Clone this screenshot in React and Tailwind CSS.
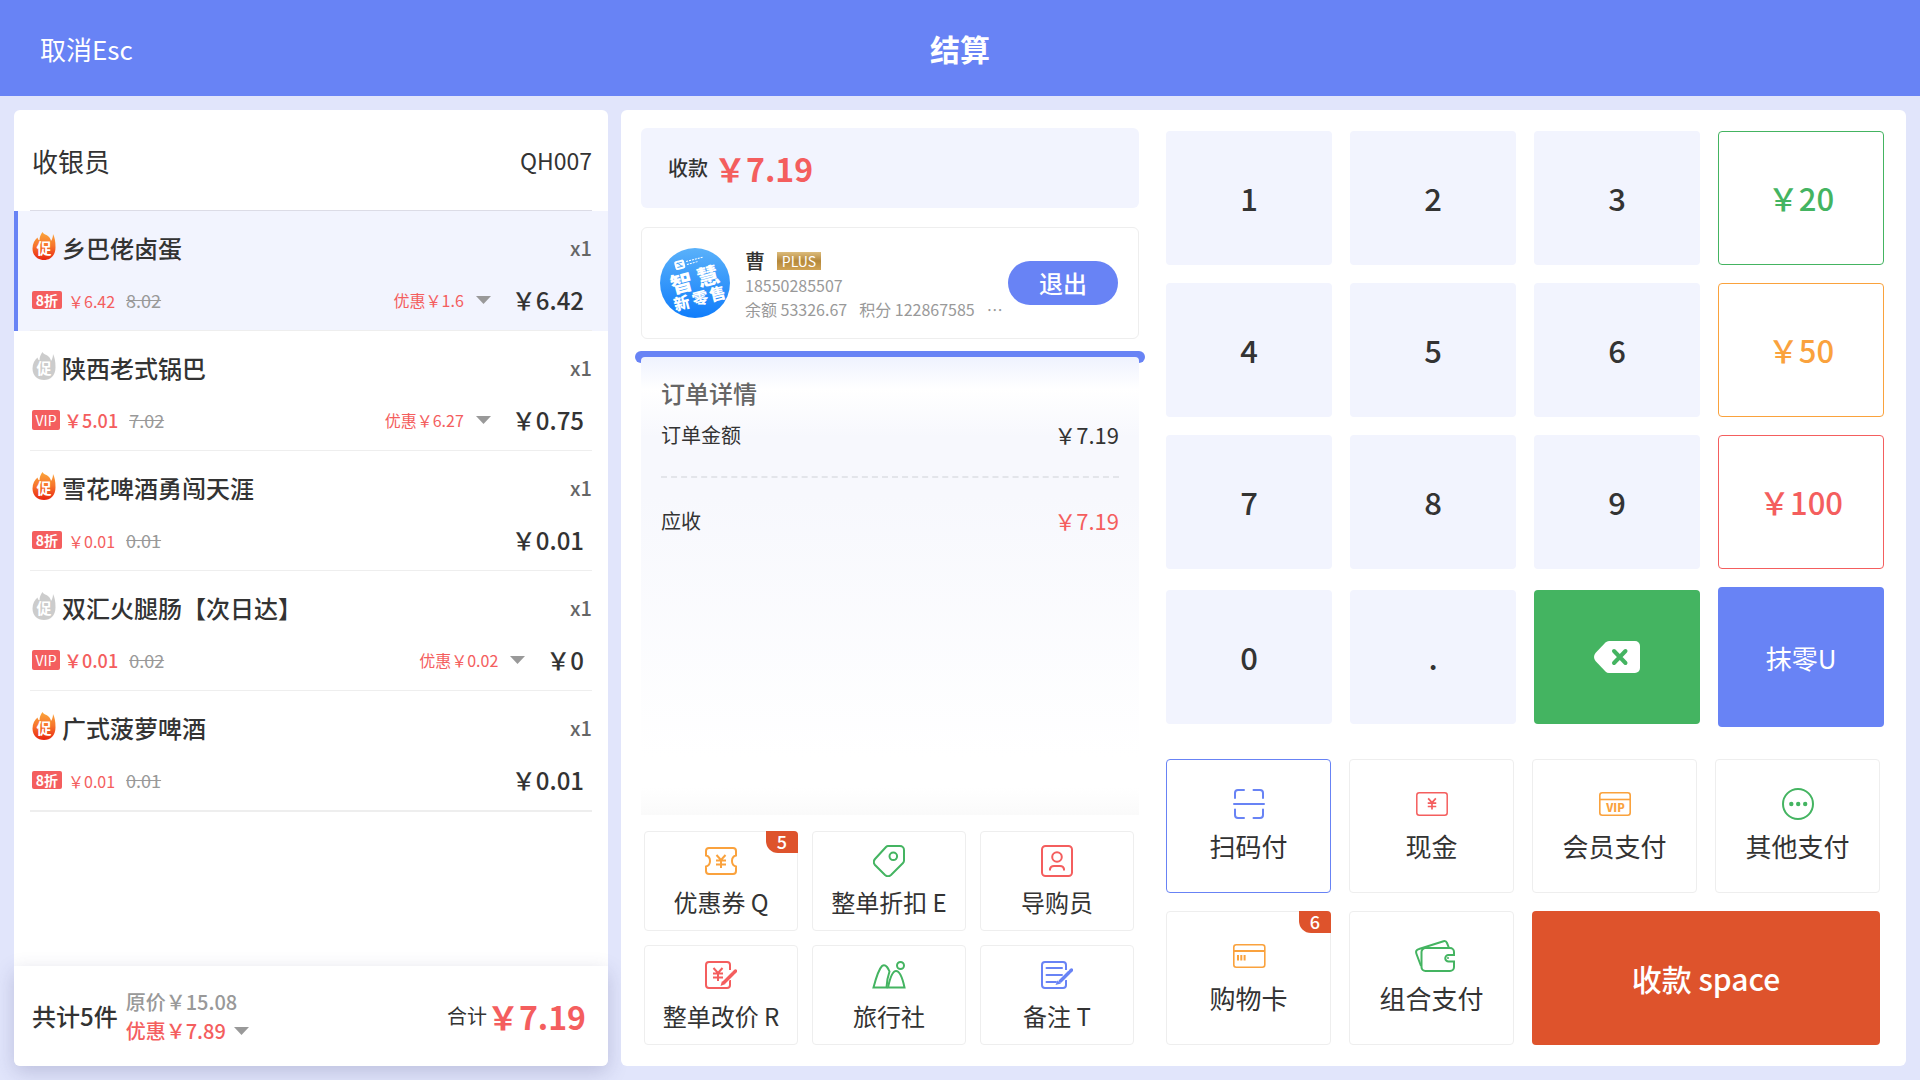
import { useState } from 'react';

const ITEMS = [
  { id: 1, name: '乡巴佬卤蛋', hot: true, tag: '8折', price: '￥6.42', origin: '8.02', discount: '优惠￥1.6', total: '￥6.42' },
  { id: 2, name: '陕西老式锅巴', hot: false, tag: 'VIP', price: '￥5.01', origin: '7.02', discount: '优惠￥6.27', total: '￥0.75' },
  { id: 3, name: '雪花啤酒勇闯天涯', hot: true, tag: '8折', price: '￥0.01', origin: '0.01', total: '￥0.01' },
  { id: 4, name: '双汇火腿肠【次日达】', hot: false, tag: 'VIP', price: '￥0.01', origin: '0.02', discount: '优惠￥0.02', total: '￥0' },
  { id: 5, name: '广式菠萝啤酒', hot: true, tag: '8折', price: '￥0.01', origin: '0.01', total: '￥0.01' },
];

const NUMBER_KEY = 'h-[134px] rounded bg-[#f2f4fe] text-[#333]';

const KEYS = [
  { label: '1', style: NUMBER_KEY },
  { label: '2', style: NUMBER_KEY },
  { label: '3', style: NUMBER_KEY },
  { label: '￥20', style: 'h-[134px] rounded border border-[#44b461] text-[#44b461]' },
  { label: '4', style: NUMBER_KEY },
  { label: '5', style: NUMBER_KEY },
  { label: '6', style: NUMBER_KEY },
  { label: '￥50', style: 'h-[134px] rounded border border-[#faa23d] text-[#faa23d]' },
  { label: '7', style: NUMBER_KEY },
  { label: '8', style: NUMBER_KEY },
  { label: '9', style: NUMBER_KEY },
  { label: '￥100', style: 'h-[134px] rounded border border-[#f45e5e] text-[#f45e5e]' },
  { label: '0', style: NUMBER_KEY },
  { label: '.', style: NUMBER_KEY },
];

function FlameIcon({ hot, id }) {
  return (
    <svg width="24" height="30" viewBox="0 0 24 30" className="mb-1 shrink-0">
      <defs>
        <linearGradient id={id} x1="0" y1="0" x2="0" y2="1">
          <stop offset="0" stopColor={hot ? '#fba73c' : '#cccccc'} />
          <stop offset="0.5" stopColor={hot ? '#f7742c' : '#cccccc'} />
          <stop offset="1" stopColor={hot ? '#e8230f' : '#cccccc'} />
        </linearGradient>
      </defs>
      <path
        d="M10.5 1c1 2.500 4 2.500 6 4.500 1.500 1.500 2.300 2.800 2.500 4.500 1.200-1.600 2-3.800 2-7 1.600 3 2.500 7 2.500 13.500 0 8-5 12.500-11.500 12.500S.5 24.500.5 17.500c0-5 2.300-8.500 5-11 .3 1.600 1 2.500 2 3 0-3.500 1-6 3-8.500z"
        fill={`url(#${id})`}
      />
      <text x="12" y="23" textAnchor="middle" fontSize="15" fontWeight="700" fill="#fff">促</text>
    </svg>
  );
}

function Yen({ x, y, s = 1 }) {
  return (
    <path
      d="M-4.500-6 0-1 4.500-6M0-1V7M-5-.5H5M-5 3.500H5"
      transform={`translate(${x} ${y}) scale(${s})`}
      fill="none"
      stroke="currentColor"
      strokeWidth="2"
    />
  );
}

function CouponIcon() {
  return (
    <svg width="32" height="28" viewBox="0 0 32 28" fill="none" stroke="currentColor" strokeWidth="2">
      <path d="M4 1h24a3 3 0 0 1 3 3v4.500c-2 .5-4 2.500-4 5.500s2 5 4 5.500V24a3 3 0 0 1-3 3H4a3 3 0 0 1-3-3v-4.500c2-.5 4-2.500 4-5.500S3 9 1 8.500V4a3 3 0 0 1 3-3z" />
      <Yen x={16} y={14} />
    </svg>
  );
}

function TagIcon() {
  return (
    <svg width="32" height="32" viewBox="0 0 32 32" fill="none" stroke="currentColor" strokeWidth="2">
      <path d="M15 1h12a4 4 0 0 1 4 4v10.500q0 1.500-1 2.500L18 30q-3 2.500-6 0L2 20q-2.500-3 0-6L13 2q1-1 2-1z" />
      <circle cx="20.300" cy="11.300" r="3.800" />
    </svg>
  );
}

function GuideIcon() {
  return (
    <svg width="32" height="32" viewBox="0 0 32 32" fill="none" stroke="currentColor" strokeWidth="2">
      <rect x="1" y="1" width="30" height="30" rx="3.500" />
      <circle cx="16" cy="12" r="4.800" />
      <path d="M9 25.500V24q.5-3 4-3h6q3.500 0 4 3v1.500" />
    </svg>
  );
}

function EditPriceIcon() {
  return (
    <svg width="32" height="28" viewBox="0 0 32 28" fill="none" stroke="currentColor" strokeWidth="2">
      <path d="M25 9V4a3 3 0 0 0-3-3H4a3 3 0 0 0-3 3v20a3 3 0 0 0 3 3h18a3 3 0 0 0 3-3v-5" />
      <Yen x={13} y={13} />
      <path d="M19 21.500 29.500 10.500" stroke="#fff" strokeWidth="5" />
      <path d="M19.500 21 28 12.500M29 11.500 30.500 10" strokeWidth="3.500" strokeLinecap="round" />
      <path d="m15.500 25 1.500-5 3.500 3z" fill="currentColor" stroke="none" />
    </svg>
  );
}

function MountainIcon() {
  return (
    <svg width="34" height="28" viewBox="0 0 34 28" fill="none" stroke="currentColor" strokeWidth="2">
      <path d="M14.500 26.500H1.500C4 17 7 8 10 5q2.500-2 5 1 1.500 1.800 2.500 4.500-2.500 7-3 16z" />
      <path d="M16 26.500C18 17 20.500 10 24 10s6.500 7 8.500 16.500z" />
      <circle cx="28.500" cy="4.500" r="3.500" />
    </svg>
  );
}

function NoteIcon() {
  return (
    <svg width="32" height="28" viewBox="0 0 32 28" fill="none" stroke="currentColor" strokeWidth="2">
      <path d="M25 9V4a3 3 0 0 0-3-3H4a3 3 0 0 0-3 3v20a3 3 0 0 0 3 3h18a3 3 0 0 0 3-3v-5" />
      <path d="M5.500 7H21M5.500 14H21M5.500 21H15" strokeLinecap="round" />
      <path d="M19.500 20.500 28 12" stroke="#fff" strokeWidth="5" />
      <path d="M19.500 20 28 11.500M29.500 10 30.500 9" strokeWidth="3.500" strokeLinecap="round" />
      <path d="m14.500 24 2-4.500 3.500 3z" fill="currentColor" stroke="none" />
    </svg>
  );
}

function ScanIcon() {
  return (
    <svg width="32" height="32" viewBox="0 0 32 32" fill="none" stroke="currentColor" strokeWidth="2" strokeLinecap="round">
      <path d="M2 10V5a3 3 0 0 1 3-3h6M20.500 2H27a3 3 0 0 1 3 3v5M2 21.500V27a3 3 0 0 0 3 3h6M20.500 30H27a3 3 0 0 0 3-3v-5.500M1 16H31" />
    </svg>
  );
}

function CashIcon() {
  return (
    <svg width="32" height="24" viewBox="0 0 32 24" fill="none" stroke="currentColor" strokeWidth="1.500">
      <rect x=".8" y=".8" width="30.400" height="22.400" rx="2.500" />
      <Yen x={16} y={11.500} s={0.85} />
    </svg>
  );
}

function VipIcon() {
  return (
    <svg width="32" height="24" viewBox="0 0 32 24" fill="none" stroke="currentColor" strokeWidth="1.600">
      <rect x=".8" y=".8" width="30.400" height="22.400" rx="2.500" />
      <path d="M1 7.500H31" />
      <text x="16.500" y="19.500" textAnchor="middle" fontSize="11" fontWeight="900" fill="currentColor" stroke="none">VIP</text>
    </svg>
  );
}

function MoreIcon() {
  return (
    <svg width="32" height="32" viewBox="0 0 32 32" fill="currentColor">
      <circle cx="16" cy="16" r="15" fill="none" stroke="currentColor" strokeWidth="2" />
      <circle cx="9.300" cy="16" r="2.200" />
      <circle cx="16.200" cy="16" r="2.200" />
      <circle cx="23.200" cy="16" r="2.200" />
    </svg>
  );
}

function CardIcon() {
  return (
    <svg width="34" height="24" viewBox="-1 0 34 24" fill="none" stroke="currentColor" strokeWidth="1.600">
      <rect x=".8" y=".8" width="31" height="22.400" rx="2.500" />
      <path d="M1 7H31.500" strokeWidth="2" />
      <path d="M5 11v5.500M8.300 11v5.500M11.600 11v5.500" strokeWidth="2" />
    </svg>
  );
}

function WalletIcon() {
  return (
    <svg width="47" height="32" viewBox="-7 0 47 32" fill="none" stroke="currentColor" strokeWidth="2">
      <path d="M10.500 8H35a4 4 0 0 1 4 4v3h-5.500a3.200 3.200 0 0 0 0 6.500H39V27a4 4 0 0 1-4 4H10.500A4 4 0 0 1 6.500 27V12a4 4 0 0 1 4-4z" />
      <path d="M6 26 1.500 14Q0 10 4 9L28.500 1.200Q31 .6 32 3l2 5" />
      <circle cx="33" cy="18" r="1" fill="currentColor" stroke="none" />
    </svg>
  );
}

function BackspaceIcon() {
  return (
    <svg width="46" height="32" viewBox="0 0 46 32">
      <path d="M15 0H41a5 5 0 0 1 5 5V27a5 5 0 0 1-5 5H15q-2 0-3.500-1.500L1.500 20q-3-4 0-8L11.500 1.500Q13 0 15 0z" fill="#fff" />
      <path d="M20 10 31.500 22M31.500 10 20 22" stroke="#44b461" strokeWidth="4" strokeLinecap="round" />
    </svg>
  );
}

function Avatar() {
  return (
    <svg width="70" height="70" viewBox="0 0 70 70" className="shrink-0">
      <defs>
        <linearGradient id="avatarBg" x1="0" y1="0" x2="0" y2="1">
          <stop offset="0" stopColor="#5ab1fa" />
          <stop offset="1" stopColor="#107dfb" />
        </linearGradient>
      </defs>
      <circle cx="35" cy="35" r="35" fill="url(#avatarBg)" />
      <g transform="rotate(-15 35 35)" fill="#fff" fontWeight="900">
        <rect x="20" y="9" width="10" height="9" rx="2" />
        <path d="M22 11.500h6M22 15.500h6M23 11l4 5" stroke="#4ba6fa" strokeWidth="1" />
        <path d="M32 12h17M32 15h12" stroke="#fff" strokeWidth="1" strokeDasharray="2 1" />
        <text x="11" y="40" fontSize="22">智</text>
        <text x="38" y="40" fontSize="22">慧</text>
        <text x="9" y="57" fontSize="16">新</text>
        <text x="28" y="57" fontSize="16">零</text>
        <text x="46" y="57" fontSize="16">售</text>
      </g>
    </svg>
  );
}

function Caret() {
  return (
    <svg width="15" height="8" viewBox="0 0 15 8" fill="#999">
      <path d="M0 0H15L7.500 8z" />
    </svg>
  );
}

const ACTIONS = [
  { label: '优惠券 Q', Icon: CouponIcon, color: 'text-[#faa23d]', badge: 5 },
  { label: '整单折扣 E', Icon: TagIcon, color: 'text-[#44b461]' },
  { label: '导购员', Icon: GuideIcon, color: 'text-[#f45e5e]' },
  { label: '整单改价 R', Icon: EditPriceIcon, color: 'text-[#f45e5e]' },
  { label: '旅行社', Icon: MountainIcon, color: 'text-[#44b461]' },
  { label: '备注 T', Icon: NoteIcon, color: 'text-[#6883f5]' },
];

const PAYMENTS = [
  { label: '扫码付', Icon: ScanIcon, color: 'text-[#6883f5]' },
  { label: '现金', Icon: CashIcon, color: 'text-[#f45e5e]' },
  { label: '会员支付', Icon: VipIcon, color: 'text-[#faa23d]' },
  { label: '其他支付', Icon: MoreIcon, color: 'text-[#44b461]' },
  { label: '购物卡', Icon: CardIcon, color: 'text-[#faa23d]', badge: 6 },
  { label: '组合支付', Icon: WalletIcon, color: 'text-[#44b461]' },
];

function Badge({ children }) {
  return (
    <span className="absolute -top-px -right-px w-8 h-[22px] rounded-tr rounded-bl-xl bg-[#de532c] text-white text-lg leading-5 font-medium text-center">
      {children}
    </span>
  );
}

function CartItem({ item, selected, onSelect }) {
  return (
    <li
      onClick={onSelect}
      className={selected ? 'border-l-4 border-[#6883f5] bg-[#f2f4fe] pl-3 pr-4' : 'border-l-4 border-transparent pl-3 pr-4'}
    >
      <div className="h-[120px] border-b border-[#eee] pt-[17px] pl-0.5">
        <div className="flex items-center">
          <FlameIcon hot={item.hot} id={`flame${item.id}`} />
          <span className="ml-1.5 text-2xl leading-10 font-medium text-[#333]">{item.name}</span>
          <span className="ml-auto text-xl leading-10 font-medium text-[#666]">x1</span>
        </div>
        <div className="mt-3 flex h-10 items-center">
          {item.tag === 'VIP' ? (
            <>
              <span className="h-5 w-7 rounded-xs bg-[#f45e5e] text-sm leading-5 text-center text-white">VIP</span>
              <span className="ml-1 text-lg font-medium text-[#f45e5e]">{item.price}</span>
            </>
          ) : (
            <>
              <span className="h-[18px] w-[30px] rounded-xs bg-[#f45e5e] text-sm leading-[18px] font-bold text-center text-white">8折</span>
              <span className="ml-1.5 pt-0.5 text-base text-[#f45e5e]">{item.price}</span>
            </>
          )}
          <s className="ml-[11px] text-lg text-[#999]">{item.origin}</s>
          {item.discount && (
            <button className="ml-auto flex items-center gap-3 text-base text-[#f45e5e]">
              {item.discount}
              <Caret />
            </button>
          )}
          <span className={item.discount ? 'ml-[21px] mr-2 text-2xl font-medium text-[#333]' : 'ml-auto mr-2 text-2xl font-medium text-[#333]'}>
            {item.total}
          </span>
        </div>
      </div>
    </li>
  );
}

export default function App() {
  const [selected, setSelected] = useState(1);
  const [payment, setPayment] = useState('扫码付');

  return (
    <div className="flex min-h-screen flex-col bg-[#e1e5fb] font-['Noto_Sans_CJK_SC',sans-serif] text-[#333]">
      <header className="grid h-24 grid-cols-3 items-center bg-[#6883f5] px-10 text-white">
        <button className="justify-self-start text-[26px]">取消Esc</button>
        <h1 className="text-center text-3xl font-bold">结算</h1>
      </header>

      <main className="grid flex-1 grid-cols-[594fr_1285fr] gap-[13px] p-[14px]">
        <section className="flex flex-col rounded-md bg-white">
          <div className="mx-4 flex h-[101px] items-center justify-between border-b border-[#dcdce6] pl-0.5">
            <span className="text-[26px]">收银员</span>
            <span className="text-[23px]">QH007</span>
          </div>
          <ul>
            {ITEMS.map((item) => (
              <CartItem key={item.id} item={item} selected={selected === item.id} onSelect={() => setSelected(item.id)} />
            ))}
          </ul>
          <div className="mx-4 h-px bg-[#eee]" />

          <div className="mt-auto flex h-[100px] items-center rounded-b-md bg-white px-[18px] shadow-[0_6px_20px_rgba(60,60,120,0.22)]">
            <span className="text-2xl font-medium">共计5件</span>
            <div className="ml-2 text-xl leading-[29px] font-medium">
              <div className="text-[#999]">原价￥15.08</div>
              <button className="flex items-center gap-2 text-[#f45e5e]">
                优惠￥7.89
                <Caret />
              </button>
            </div>
            <span className="ml-auto text-xl">合计</span>
            <span className="mr-1 text-[32px] font-bold text-[#f45e5e]">￥7.19</span>
          </div>
        </section>

        <section className="grid grid-cols-[498fr_718fr] gap-[27px] rounded-md bg-white pl-5 pr-[22px]">
          <div className="flex min-w-0 flex-col pt-[18px] pb-[21px]">
            <div className="flex h-20 items-center rounded-md bg-[#f2f4fe] px-[27px]">
              <span className="text-xl font-medium">收款</span>
              <span className="ml-1.5 text-[32px] font-bold text-[#f45e5e]">￥7.19</span>
            </div>

            <div className="mt-[19px] flex h-28 items-center rounded-md border border-[#eee] pl-[18px] pr-5">
              <Avatar />
              <div className="ml-[15px] min-w-0 flex-1 pt-1 text-base leading-6 text-[#999]">
                <div className="flex items-center">
                  <span className="text-xl font-medium leading-6 text-[#333]">曹</span>
                  <span className="ml-3 h-[18px] w-11 bg-linear-to-b from-[#dcbc7c] via-[#b5883a] to-[#d0a354] text-center text-sm leading-[18px] text-white">PLUS</span>
                </div>
                <div>18550285507</div>
                <div className="flex gap-3 whitespace-nowrap">
                  <span>余额 53326.67</span>
                  <span>积分 122867585</span>
                  <span>…</span>
                </div>
              </div>
              <button className="h-11 w-[110px] shrink-0 rounded-full bg-[#6883f5] text-2xl leading-[44px] font-medium text-white">退出</button>
            </div>

            <div className="-mx-1.5 mt-3 h-3 rounded-full bg-[#6883f5]" />
            <div className="relative -mt-1.5 flex-1 rounded-t bg-[linear-gradient(180deg,#eff2fe_0,#fff_32px,#f7f8fd_80px,#f7f8fd_140px,#fff_400px,#fff_94%,#fafafa_100%)] px-5">
              <h2 className="pt-[18px] text-2xl leading-9 font-medium text-[#666]">订单详情</h2>
              <div className="flex items-center justify-between pt-[7px]">
                <span className="text-xl">订单金额</span>
                <span className="text-[22px]">￥7.19</span>
              </div>
              <div className="mt-[25px] border-t-2 border-dashed border-[#e3e5ea]" />
              <div className="mt-[26px] flex items-center justify-between">
                <span className="text-xl">应收</span>
                <span className="text-[22px] text-[#f45e5e]">￥7.19</span>
              </div>
            </div>

            <div className="mt-4 ml-[3px] mr-[5px] grid grid-cols-3 gap-[14px]">
              {ACTIONS.map(({ label, Icon, color, badge }) => (
                <button key={label} className="relative flex h-[100px] flex-col items-center rounded border border-[#eee] pt-[11px] text-2xl">
                  <span className={`flex h-9 items-center ${color}`}><Icon /></span>
                  <span className="mt-[7px]">{label}</span>
                  {badge && <Badge>{badge}</Badge>}
                </button>
              ))}
            </div>
          </div>

          <div className="flex flex-col justify-between py-[21px]">
            <div className="grid grid-cols-4 items-center gap-[18px] text-[31px] font-medium">
              {KEYS.map((key) => (
                <button key={key.label} className={key.style}>{key.label}</button>
              ))}
              <button aria-label="退格" className="flex h-[134px] items-center justify-center rounded bg-[#44b461]">
                <BackspaceIcon />
              </button>
              <button className="h-[140px] rounded bg-[#6883f5] text-[26px] font-normal text-white">抹零U</button>
            </div>

            <div className="mr-1 grid grid-cols-4 gap-[18px]">
              {PAYMENTS.map(({ label, Icon, color, badge }) => (
                <button
                  key={label}
                  onClick={() => setPayment(label)}
                  className={`relative flex h-[134px] flex-col items-center rounded border pt-[26px] text-[26px] ${payment === label ? 'border-[#6883f5]' : 'border-[#eee]'}`}
                >
                  <span className={`flex h-9 items-center ${color}`}><Icon /></span>
                  <span className="mt-1">{label}</span>
                  {badge && <Badge>{badge}</Badge>}
                </button>
              ))}
              <button className="col-span-2 h-[134px] rounded bg-[#de532c] text-3xl font-medium text-white">收款 space</button>
            </div>
          </div>
        </section>
      </main>
    </div>
  );
}
